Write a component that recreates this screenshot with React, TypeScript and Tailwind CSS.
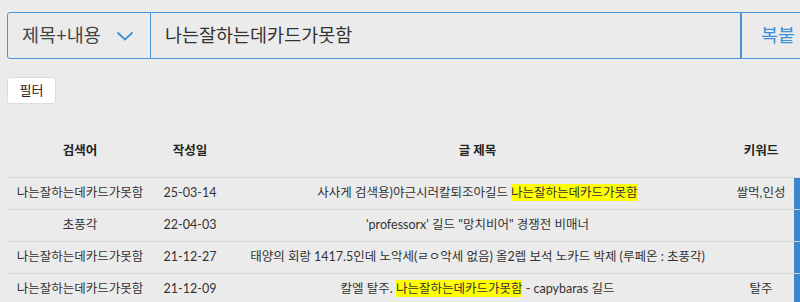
import React from 'react';

// 검색 결과 목록
interface Row {
  keyword: string;
  date: string;
  title: React.ReactNode;
  tag: string;
}

const HL = ({ children }: { children: React.ReactNode }) => (
  <span className="bg-[#ffff00] py-[1px]">{children}</span>
);

const rows: Row[] = [
  {
    keyword: '나는잘하는데카드가못함',
    date: '25-03-14',
    title: (
      <>
        사사게 검색용)야근시러칼퇴조아길드 <HL>나는잘하는데카드가못함</HL>
      </>
    ),
    tag: '쌀먹,인성',
  },
  {
    keyword: '초풍각',
    date: '22-04-03',
    title: <>'professorx' 길드 "망치비어" 경쟁전 비매너</>,
    tag: '',
  },
  {
    keyword: '나는잘하는데카드가못함',
    date: '21-12-27',
    title: <>태양의 회랑 1417.5인데 노악세(ㄹㅇ악세 없음) 올2렙 보석 노카드 박제 (루페온 : 초풍각)</>,
    tag: '',
  },
  {
    keyword: '나는잘하는데카드가못함',
    date: '21-12-09',
    title: (
      <>
        칼엘 탈주. <HL>나는잘하는데카드가못함</HL> - capybaras 길드
      </>
    ),
    tag: '탈주',
  },
];

export default function App() {
  return (
    <div
      className="w-[800px] h-[302px] overflow-hidden bg-[#ebebeb] text-[#333]"
      style={{ fontFamily: "Lato, 'Noto Sans CJK KR', sans-serif" }}
    >
      <div className="w-[920px] pl-[7px] pt-[12px]">
        {/* 검색바 */}
        <div className="flex h-[47px]">
          <div className="w-[144px] flex items-center justify-between pl-[14px] pr-[16px] border border-[#4a92dc] rounded-l-[3px] text-[18.5px] text-[#444]">
            <span>제목+내용</span>
            <svg width="18" height="12" viewBox="0 0 18 12" fill="none" stroke="#3d8fd9" strokeWidth="1.8">
              <path d="M1.5 2.5 L9 9.5 L16.5 2.5" />
            </svg>
          </div>
          <div className="w-[591px] flex items-center pl-[14px] border-y border-r-2 border-[#4a92dc] text-[18.5px] text-[#333]">
            나는잘하는데카드가못함
          </div>
          <div className="w-[120px] flex items-center pl-[19px] border-y border-[#4a92dc] text-[18.5px] text-[#3d8fd9]">
            복붙
          </div>
        </div>

        {/* 필터 */}
        <div className="mt-[18px] w-[49px] h-[27px] flex items-center justify-center bg-white border border-[#dcdcdc] rounded-[3px] text-[13px] text-[#222]">
          필터
        </div>

        {/* 결과 테이블 */}
        <table className="mt-[23px] table-fixed border-collapse text-[12.5px]">
          <colgroup>
            <col className="w-[146px]" />
            <col className="w-[74px]" />
            <col className="w-[501px]" />
            <col className="w-[66px]" />
            <col className="w-[40px]" />
          </colgroup>
          <thead>
            <tr className="h-[50px] border-b border-[#d6d6d6] font-bold text-[#222]">
              <th className="text-center">검색어</th>
              <th className="text-center">작성일</th>
              <th className="text-center">글 제목</th>
              <th className="text-center">키워드</th>
              <th></th>
            </tr>
          </thead>
          <tbody>
            {rows.map((r, i) => (
              <tr key={i} className="h-[32px] border-b border-[#d6d6d6]">
                <td className="text-center whitespace-nowrap">{r.keyword}</td>
                <td className="text-center whitespace-nowrap">{r.date}</td>
                <td className="text-center whitespace-nowrap">{r.title}</td>
                <td className="text-center whitespace-nowrap">{r.tag}</td>
                <td className="p-0 align-middle">
                  <div className="h-[31px] bg-[#3b86cc]" />
                </td>
              </tr>
            ))}
          </tbody>
        </table>
      </div>
    </div>
  );
}
